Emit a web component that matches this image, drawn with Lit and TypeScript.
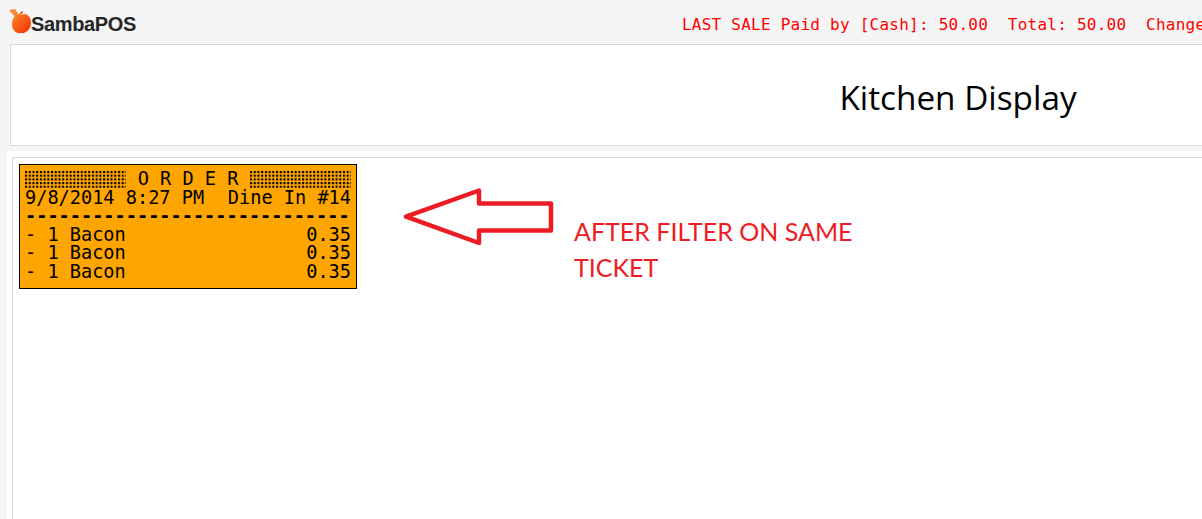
import { LitElement, css, html } from 'lit';
import { customElement } from 'lit/decorators.js';

const orders = ['Bacon', 'Bacon', 'Bacon'];

@customElement('app-root')
export class AppRoot extends LitElement {
  static override styles = css`
    :host {
      display: block;
      height: 519px;
      overflow: hidden;
      position: relative;
      background: #f5f5f5;
    }

    .top {
      height: 44px;
      display: flex;
      align-items: center;
      justify-content: space-between;
      white-space: nowrap;
    }

    .logo {
      display: flex;
      align-items: center;
      margin-left: 9px;
    }

    .logo svg {
      display: block;
      margin-top: -3px;
    }

    .logo span {
      font: bold 20px 'Liberation Sans', sans-serif;
      letter-spacing: -0.35px;
      color: #262626;
      margin-left: -2px;
      margin-top: 5px;
    }

    .last-sale {
      width: 520px;
      overflow: hidden;
      margin-top: 5px;
      font: 16px 'DejaVu Sans Mono', monospace;
      letter-spacing: 0.24px;
      color: #ff0000;
      white-space: pre;
    }

    .panel {
      background: #fff;
      border: 1px solid #d9d9d9;
      box-sizing: border-box;
    }

    .title {
      width: 1896px;
      margin-left: 10px;
      height: 102px;
      display: flex;
      align-items: center;
      justify-content: center;
      padding-top: 3px;
      font: 33.3px 'Open Sans', sans-serif;
      color: #000;
      white-space: nowrap;
    }

    .body {
      margin: 5px 0 0 7px;
      padding: 6px 0 0 5px;
      background: #fff;
    }

    .content {
      width: 1896px;
      height: 370px;
      padding: 6px;
    }

    .ticket {
      width: 338px;
      height: 125px;
      box-sizing: border-box;
      border: 1px solid #000;
      background: #ffa500;
      padding: 5px 5px 0;
      font: 18.6px/18.5px 'DejaVu Sans Mono', monospace;
      color: #000;
    }

    .row {
      display: flex;
      justify-content: space-between;
      white-space: pre;
    }

    .head {
      align-items: center;
    }

    .shade {
      width: 101px;
      height: 17px;
      background-image: radial-gradient(circle at 1px 1px, #000 1.1px, transparent 1.5px);
      background-size: 3.73px 3.7px;
    }

    .rule {
      height: 18.5px;
      overflow: hidden;
      white-space: pre;
      font-weight: bold;
    }

    .arrow {
      position: absolute;
      left: 400px;
      top: 185px;
    }

    .note {
      position: absolute;
      left: 574px;
      top: 213px;
      width: 300px;
      font: 25px/36px 'Lato', sans-serif;
      color: #ed1c24;
    }
  `;

  override render() {
    return html`
      <div class="top">
        <div class="logo">
          <svg width="24" height="26" viewBox="0 0 24 26">
            <defs>
              <linearGradient id="apple" x1="0" y1="0" x2="1" y2="1">
                <stop offset="0" stop-color="#ff8a2a" />
                <stop offset="1" stop-color="#f22a00" />
              </linearGradient>
            </defs>
            <path d="M0 2 L6 1 L11 8 L6 9 Z" fill="#f58a3c" />
            <path d="M11 7 Q12 4 14 4" stroke="#e2551a" stroke-width="1.3" fill="none" />
            <path
              d="M12 7 C17 4 22 8 22 15 C22 21 17 26 12 25 C7 26 3 22 3 16 C3 10 7 5 12 7 Z"
              fill="url(#apple)" />
          </svg>
          <span>SambaPOS</span>
        </div>
        <div class="last-sale">LAST SALE Paid by [Cash]: 50.00  Total: 50.00  Change: 0.00</div>
      </div>
      <div class="panel title">Kitchen Display</div>
      <div class="body">
        <div class="panel content">
          <div class="ticket">
            <div class="row head">
              <div class="shade"></div>
              <div>O R D E R</div>
              <div class="shade"></div>
            </div>
            <div class="row"><span>9/8/2014 8:27 PM</span><span>Dine In #14</span></div>
            <div class="rule">-----------------------------</div>
            ${orders.map(
              (name) => html`<div class="row"><span>- 1 ${name}</span><span>0.35</span></div>`
            )}
          </div>
        </div>
      </div>
      <svg class="arrow" width="160" height="66" viewBox="0 0 160 66">
        <path
          d="M6 31.7 L79 5.5 L79 18.5 L151 18.5 L151 45.5 L79 45.5 L79 58 Z"
          fill="#fff"
          stroke="#ed1c24"
          stroke-width="4.5"
          stroke-linejoin="round" />
      </svg>
      <div class="note">AFTER FILTER ON SAME<br />TICKET</div>
    `;
  }
}
